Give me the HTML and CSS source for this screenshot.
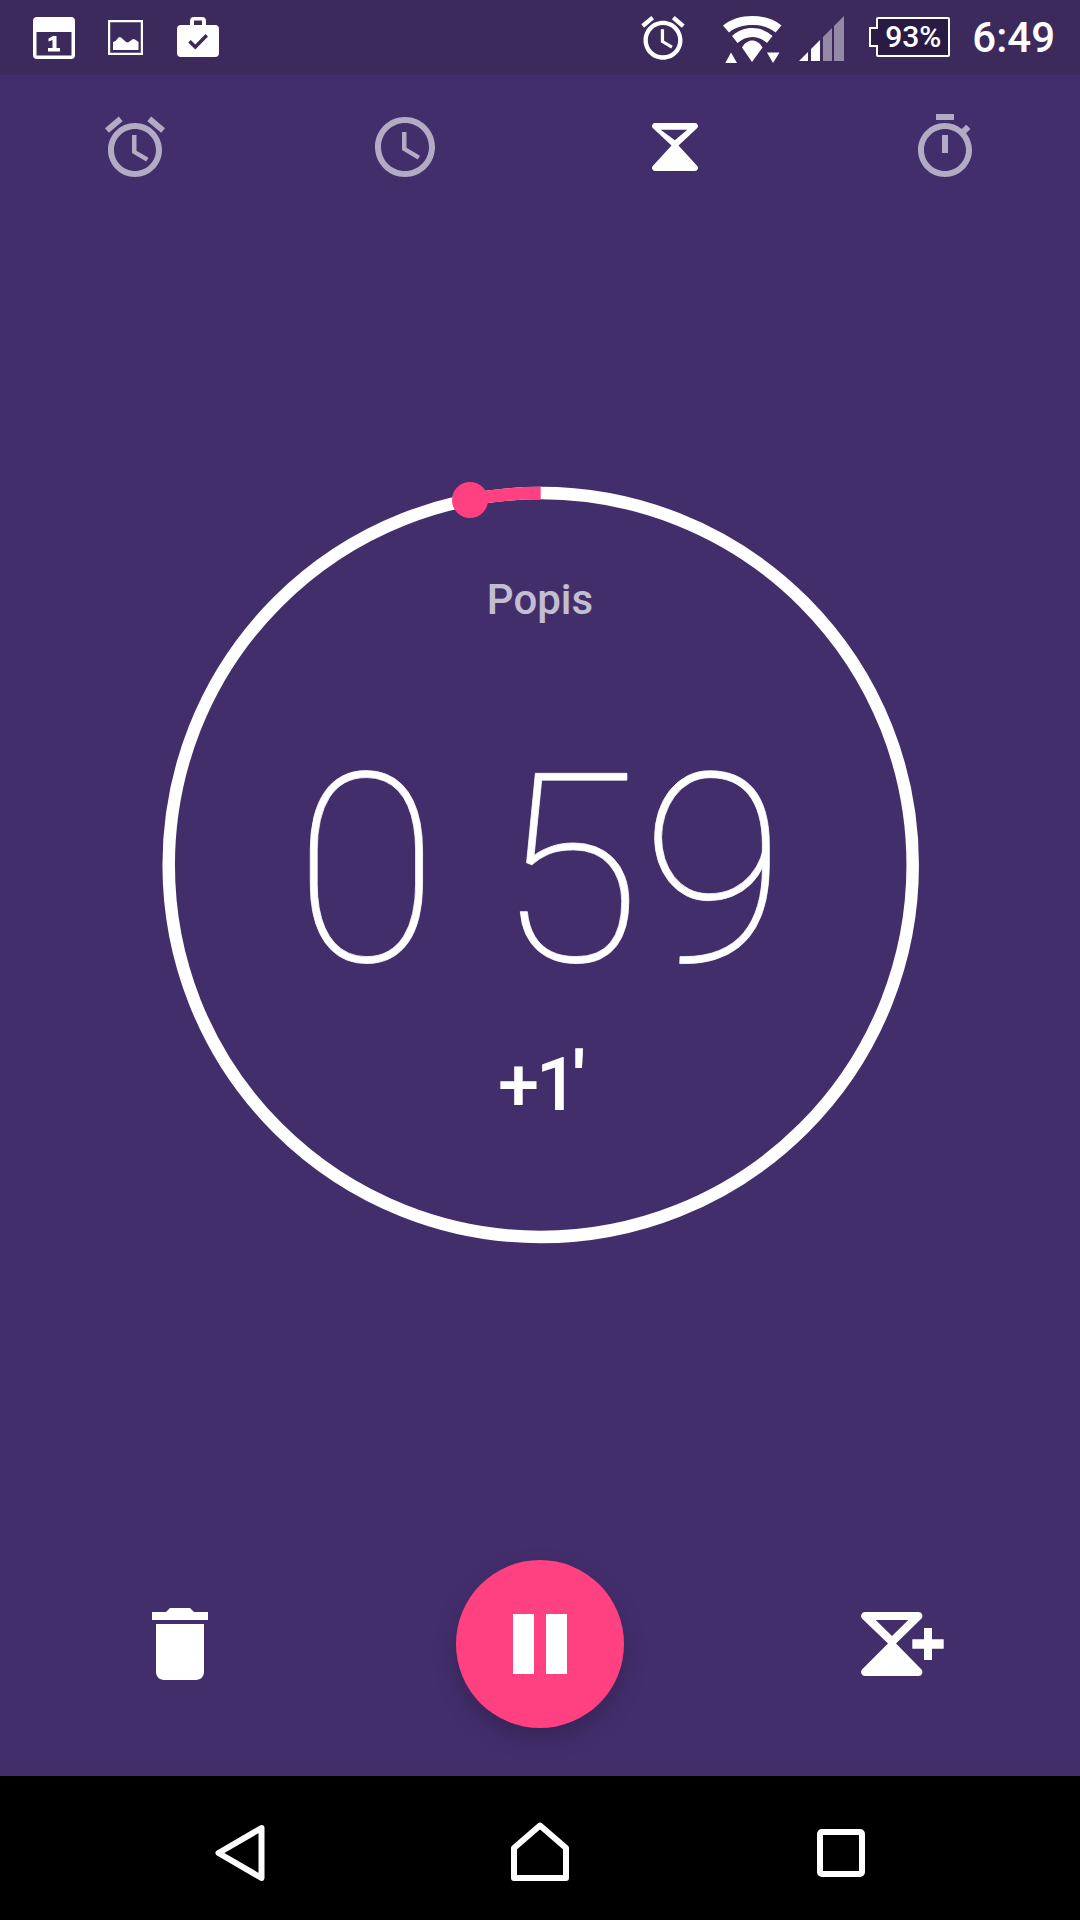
FILE: index.html
```html
<!DOCTYPE html>
<html lang="en">
<head>
    <meta charset="UTF-8">
    <meta name="viewport" content="width=device-width, initial-scale=1.0">
    <title>Timer</title>
    <link rel="stylesheet" href="styles.css">
</head>
<body>
    <div class="status-bar">
        <div class="status-left">
            <!-- calendar -->
            <svg class="notif-calendar" width="42" height="42" viewBox="0 0 42 42">
                <path fill-rule="evenodd" d="M4 0h34a4 4 0 0 1 4 4v34a4 4 0 0 1-4 4H4a4 4 0 0 1-4-4V4a4 4 0 0 1 4-4zM3.500 15v23.500h35V15z"/>
                <path d="M15.500 21.500l4.500-2.500h3.500v12H27v3.500H15V31h4.500v-8l-4 1.500z"/>
            </svg>
            <!-- picture -->
            <svg class="notif-picture" width="35" height="35" viewBox="0 0 35 35">
                <path fill-rule="evenodd" d="M0 0h35v35H0zM2.200 2.200v30.600h30.600V2.200z"/>
                <path d="M5 30v-8l2.500-1 3.500-4 2 .5 5 4.500 2 .5 5-3.500 2 .5 3.500 2.500V30z"/>
            </svg>
            <!-- briefcase with check -->
            <svg class="notif-case" width="42" height="40" viewBox="0 0 42 40">
                <path fill-rule="evenodd" d="M13 8V4a4 4 0 0 1 4-4h8a4 4 0 0 1 4 4v4h9a4 4 0 0 1 4 4v24a4 4 0 0 1-4 4H4a4 4 0 0 1-4-4V12a4 4 0 0 1 4-4zM17 3.500v4.500h8V3.500zM18.300 32.500L31 19.500l-2.500-2.500-10.200 10.500-4.500-4.500-2.500 2.500z"/>
            </svg>
        </div>
        <div class="status-right">
            <svg class="stat-alarm" width="52" height="52" viewBox="0 0 24 24">
                <path d="M22 5.720l-4.600-3.860-1.290 1.530 4.600 3.860L22 5.720zM7.880 3.390L6.600 1.860 2 5.710l1.290 1.530 4.590-3.850zM12.500 8H11v6l4.750 2.850.75-1.230-4-2.370V8zM12 4c-4.970 0-9 4.030-9 9s4.020 9 9 9c4.970 0 9-4.030 9-9s-4.030-9-9-9zm0 16c-3.870 0-7-3.130-7-7s3.130-7 7-7 7 3.130 7 7-3.130 7-7 7z"/>
            </svg>
            <svg class="stat-wifi" width="59" height="48" viewBox="0 0 59 48">
                <path d="M0 9.500C8 3 18 0 29.250 0S50.500 3 58.500 9.500l-6 7C46 11 38 9 29.250 9S12.500 11 6 16.500z"/>
                <path d="M9 20C15 14.500 22 12 29.250 12S43.500 14.500 49.500 20l-5.500 7C39.500 23 34.500 21 29.250 21S19 23 14.500 27z"/>
                <path d="M19 31.500C22 26.500 25.500 24.500 29.250 24.500s7.250 2 10.250 7L29 46z"/>
                <path d="M8 36.500l6 10.500H2.300zM44 36.500h12.500L50 47z"/>
            </svg>
            <svg class="stat-signal" width="45" height="45" viewBox="0 0 45 45">
                <path class="dim" d="M24 21l9-9v33h-9zM35 10L45 0v45H35z"/>
                <path d="M0 45l9-9v9zM12 33l9-9v21h-9z"/>
            </svg>
            <div class="battery">
                <span class="battery-cap"></span>
                <span class="battery-body">93%</span>
            </div>
            <span class="clock">6:49</span>
        </div>
    </div>

    <div class="main">
        <div class="tabs">
            <div class="tab">
                <svg width="72" height="72" viewBox="0 0 24 24">
                    <path d="M22 5.720l-4.600-3.860-1.290 1.530 4.600 3.860L22 5.720zM7.880 3.390L6.600 1.860 2 5.710l1.290 1.530 4.590-3.850zM12.500 8H11v6l4.750 2.850.75-1.230-4-2.370V8zM12 4c-4.970 0-9 4.030-9 9s4.020 9 9 9c4.970 0 9-4.030 9-9s-4.030-9-9-9zm0 16c-3.870 0-7-3.130-7-7s3.130-7 7-7 7 3.130 7 7-3.130 7-7 7z"/>
                </svg>
            </div>
            <div class="tab">
                <svg width="72" height="72" viewBox="0 0 24 24">
                    <path d="M11.990 2C6.470 2 2 6.480 2 12s4.470 10 9.990 10C17.520 22 22 17.520 22 12S17.520 2 11.990 2zM12 20c-4.420 0-8-3.580-8-8s3.580-8 8-8 8 3.580 8 8-3.580 8-8 8zm.5-13H11v6l5.250 3.150.75-1.230-4.500-2.670z"/>
                </svg>
            </div>
            <div class="tab tab-active">
                <svg width="46" height="48" viewBox="0 0 46 48">
                    <path fill-rule="evenodd" d="M3 0h40a3 3 0 0 1 2 5.200L26.500 22.500 45 42.800A3 3 0 0 1 43 48H3a3 3 0 0 1-2-5.200L19.500 22.500 1 5.200A3 3 0 0 1 3 0zM8.700 6.700L22.800 17.300 35.300 6.700z"/>
                </svg>
            </div>
            <div class="tab">
                <svg width="72" height="72" viewBox="0 0 24 24">
                    <path d="M15 1H9v2h6V1zm-4 13h2V8h-2v6zm8.030-6.610l1.420-1.420c-.430-.510-.900-.990-1.410-1.410l-1.420 1.420C16.070 4.740 14.120 4 12 4c-4.970 0-9 4.030-9 9s4.020 9 9 9 9-4.030 9-9c0-2.120-.740-4.070-1.970-5.610zM12 20c-3.870 0-7-3.130-7-7s3.130-7 7-7 7 3.130 7 7-3.130 7-7 7z"/>
                </svg>
            </div>
        </div>

        <div class="dial">
            <svg class="dial-ring" width="756" height="756" viewBox="0 0 756 756">
                <circle class="ring-track" cx="378.700" cy="378" r="372"/>
                <path class="ring-elapsed" d="M378.700 6A372 372 0 0 0 308 12.750"/>
                <circle class="ring-dot" cx="308" cy="13" r="18"/>
            </svg>
            <div class="timer-label">Popis</div>
            <div class="timer-time">0 59</div>
            <div class="timer-add">+1<span class="prime">'</span></div>
        </div>

        <div class="actions">
            <div class="action">
                <svg width="96" height="96" viewBox="0 0 24 24">
                    <path d="M6 19c0 1.100.9 2 2 2h8c1.100 0 2-.9 2-2V7H6v12zM19 4h-3.500l-1-1h-5l-1 1H5v2h14V4z"/>
                </svg>
            </div>
            <div class="action">
                <div class="fab">
                    <svg width="54" height="60" viewBox="0 0 54 60">
                        <path d="M0 0h21v60H0zM33 0h21v60H33z"/>
                    </svg>
                </div>
            </div>
            <div class="action">
                <svg class="add-timer" width="84" height="64" viewBox="0 0 84 64">
                    <path fill-rule="evenodd" d="M4 0h53.500a4 4 0 0 1 3 6.500L35 31.500l25.500 26a4 4 0 0 1-3 6.500H4a4 4 0 0 1-3-6.500L27 31.500 1 6.500A4 4 0 0 1 4 0zM14.700 8L31 24 47.300 8z"/>
                    <path d="M63 16h8v11.300H82.700v9.400H71V48h-8V36.700H51.300v-9.400H63z"/>
                </svg>
            </div>
        </div>
    </div>

    <div class="nav-bar">
        <svg class="nav-back" width="50" height="56" viewBox="0 0 50 56">
            <path d="M46.500 3L3.500 28l43 25z"/>
        </svg>
        <svg class="nav-home" width="58" height="59" viewBox="0 0 58 59">
            <path d="M29 3.500L3 26v30h52V26z"/>
        </svg>
        <svg class="nav-recent" width="48" height="48" viewBox="0 0 48 48">
            <rect x="3" y="3" width="42" height="42" rx="2"/>
        </svg>
    </div>
</body>
</html>
```

FILE: styles.css
```css
* {
    margin: 0;
    padding: 0;
    box-sizing: border-box;
}

body {
    width: 1080px;
    height: 1920px;
    display: flex;
    flex-direction: column;
    font-family: Roboto, sans-serif;
    background: #432e6c;
    color: white;
    overflow: hidden;
}

svg {
    display: block;
    fill: white;
}

.status-bar {
    height: 75px;
    background: #3c2a5c;
    display: flex;
    justify-content: space-between;
    align-items: flex-start;
}

.status-left {
    display: flex;
    align-items: flex-start;
    padding: 17px 0 0 33px;
}

.notif-picture {
    margin: 3px 0 0 33px;
}

.notif-case {
    margin-left: 34px;
}

.status-right {
    display: flex;
    align-items: flex-start;
    padding: 12px 25px 0 0;
}

.stat-wifi {
    margin: 4px 0 0 34px;
}

.stat-signal {
    margin: 4px 0 0 17px;
}

.stat-signal .dim {
    opacity: 0.45;
}

.battery {
    display: flex;
    align-items: center;
    height: 40px;
    margin: 5px 0 0 25px;
}

/* sits over the body's left border so the two read as one outline */
.battery-cap {
    position: relative;
    width: 9px;
    height: 20px;
    margin-right: -2px;
    background: #2a1b45;
    border: 2px solid white;
    border-right: none;
}

.battery-body {
    width: 74px;
    height: 40px;
    background: #2a1b45;
    border: 2px solid white;
    border-radius: 2px;
    font-size: 30px;
    font-weight: 500;
    line-height: 36px;
    text-align: center;
}

.clock {
    margin: -1px 0 0 22px;
    font-size: 42px;
    font-weight: 500;
    line-height: 54px;
}

.main {
    flex: 1;
    display: flex;
    flex-direction: column;
}

.tabs {
    height: 144px;
    display: grid;
    grid-template-columns: repeat(4, 1fr);
}

.tab {
    display: flex;
    align-items: center;
    justify-content: center;
}

.tab svg {
    fill: rgba(255, 255, 255, 0.6);
}

.tab-active svg {
    fill: white;
}

.dial {
    position: relative;
    width: 756px;
    height: 756px;
    margin: 268px auto 0;
    padding-top: 88px;
    display: flex;
    flex-direction: column;
    align-items: center;
}

.dial-ring {
    position: absolute;
    top: 0;
    left: 0;
    overflow: visible;
}

.ring-track {
    fill: none;
    stroke: white;
    stroke-width: 12.5;
}

.ring-elapsed {
    fill: none;
    stroke: #ff4081;
    stroke-width: 12.5;
}

.ring-dot {
    fill: #ff4081;
}

.timer-label {
    position: relative;
    font-size: 42px;
    font-weight: 500;
    line-height: 50px;
    color: rgba(255, 255, 255, 0.7);
}

.timer-time {
    position: relative;
    margin-top: 114px;
    font-size: 264px;
    font-weight: 100;
    line-height: 264px;
    word-spacing: -5px;
    -webkit-text-stroke: 0.8px white;
}

.timer-add {
    position: relative;
    margin-top: 45px;
    font-size: 74px;
    font-weight: 500;
    line-height: 74px;
    letter-spacing: -3px;
}

.prime {
    position: relative;
    top: -6px;
    margin-left: -2px;
    font-weight: 700;
}

.actions {
    margin-top: 317px;
    height: 168px;
    display: grid;
    grid-template-columns: repeat(3, 1fr);
}

.action {
    display: flex;
    align-items: center;
    justify-content: center;
}

.add-timer {
    margin-left: 6px;
}

.fab {
    width: 168px;
    height: 168px;
    border-radius: 50%;
    background: #ff4081;
    box-shadow: 0 10px 24px rgba(0, 0, 0, 0.2);
    display: flex;
    align-items: center;
    justify-content: center;
}

.nav-bar {
    position: relative;
    height: 144px;
    background: black;
}

/* the three soft keys keep their places relative to the bar */
.nav-bar svg {
    position: absolute;
    fill: none;
    stroke: white;
    stroke-width: 6;
    stroke-linejoin: round;
}

.nav-back {
    left: 215px;
    top: 49px;
}

.nav-home {
    left: 511px;
    top: 46px;
}

.nav-recent {
    left: 817px;
    top: 53px;
}
```
